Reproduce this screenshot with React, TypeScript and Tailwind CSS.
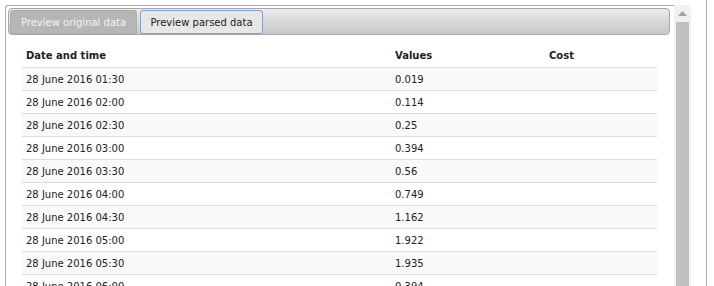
import React from "react";

const rows = [
  { date: "28 June 2016 01:30", value: "0.019" },
  { date: "28 June 2016 02:00", value: "0.114" },
  { date: "28 June 2016 02:30", value: "0.25" },
  { date: "28 June 2016 03:00", value: "0.394" },
  { date: "28 June 2016 03:30", value: "0.56" },
  { date: "28 June 2016 04:00", value: "0.749" },
  { date: "28 June 2016 04:30", value: "1.162" },
  { date: "28 June 2016 05:00", value: "1.922" },
  { date: "28 June 2016 05:30", value: "1.935" },
  { date: "28 June 2016 06:00", value: "0.394" },
];

function Scrollbar() {
  return (
    <div className="w-[17px] mt-[5px] bg-[#f1f1f1] flex flex-col items-center">
      <div className="h-[17px] w-full flex items-center justify-center">
        <svg width="9" height="5" viewBox="0 0 9 5">
          <polygon points="4.5,0 9,5 0,5" fill="#a3a3a3" />
        </svg>
      </div>
      <div className="w-[13px] flex-1 bg-[#c1c1c1]" />
    </div>
  );
}

export default function App() {
  return (
    <div
      className="w-[714px] h-[286px] overflow-hidden bg-white text-[#222]"
      style={{ fontFamily: '"DejaVu Sans", Verdana, sans-serif' }}
    >
      <div className="w-[707px] h-full border-r border-[#a9a9a9] flex">
        <div className="pl-[5px] pt-[5px] flex-1 flex">
          <div className="flex-1 border-l border-t border-[#a9a9a9] rounded-tl-[3px] pt-[2px] pl-[2px] pr-[4px]">
            {/* tab strip */}
            <div className="h-[27px] border border-[#a8a8a8] rounded-[4px] bg-gradient-to-b from-[#ebebeb] to-[#c8c8c8] flex items-end pl-[1px] gap-[3px]">
              <div className="w-[127px] h-[24px] bg-[#b6b6b6] border border-[#adadad] rounded-t-[3px] flex items-center justify-center text-[10px] text-[#f4f4f4]">
                Preview original data
              </div>
              <div className="w-[123px] h-[24px] bg-[#e7e7e7] border border-[#7d9fdb] rounded-[3px] flex items-center justify-center text-[10px] text-[#222]">
                Preview parsed data
              </div>
            </div>

            {/* table */}
            <div className="ml-[14px] mt-[9px] w-[635px] text-[10px]">
              <div className="grid grid-cols-[369px_154px_112px] h-[23px] items-center font-bold">
                <div className="pl-[4px]">Date and time</div>
                <div className="pl-[4px]">Values</div>
                <div className="pl-[4px]">Cost</div>
              </div>
              {rows.map((r, i) => (
                <div
                  key={r.date}
                  className={`grid grid-cols-[369px_154px_112px] h-[23px] items-center border-t border-[#dddddd] ${
                    i % 2 === 0 ? "bg-[#f9f9f9]" : "bg-white"
                  }`}
                >
                  <div className="pl-[4px]">{r.date}</div>
                  <div className="pl-[4px]">{r.value}</div>
                  <div className="pl-[4px]"></div>
                </div>
              ))}
            </div>
          </div>
        </div>
        <Scrollbar />
        <div className="w-[15px]" />
      </div>
    </div>
  );
}
